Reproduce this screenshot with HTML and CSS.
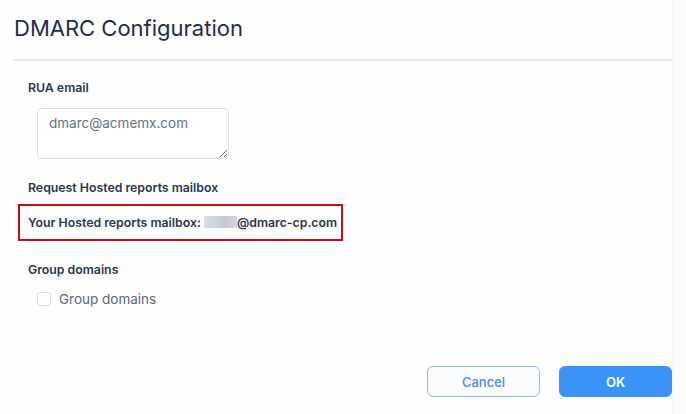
FILE: index.html
```html
<!doctype html>
<html lang="en">

<head>
    <meta charset="utf-8">
    <meta name="viewport" content="width=device-width, initial-scale=1">
    <title>DMARC Configuration</title>
    <link rel="stylesheet" href="styles.css">
</head>

<body>
    <div class="dialog">
        <h1 class="dialog-title">DMARC Configuration</h1>

        <div class="dialog-body">
            <div class="field">
                <label class="field-label" for="rua-email">RUA email</label>
                <textarea id="rua-email" class="rua-input">dmarc@acmemx.com</textarea>
            </div>

            <div class="field">
                <div class="field-label">Request Hosted reports mailbox</div>
                <div class="mailbox-box">
                    <span>Your Hosted reports mailbox: <span class="blurred"></span>@dmarc-cp.com</span>
                </div>
            </div>

            <div class="field group">
                <div class="field-label">Group domains</div>
                <label class="check-row">
                    <span class="check"></span>
                    <span>Group domains</span>
                </label>
            </div>
        </div>

        <div class="dialog-footer">
            <button class="btn btn-cancel">Cancel</button>
            <button class="btn btn-ok">OK</button>
        </div>
    </div>
</body>

</html>
```

FILE: styles.css
```css
body {
    margin: 0;
    background-color: #fbfbfc;
    font-family: Inter, "Noto Sans", sans-serif;
    color: #1f2b45;
}

.dialog {
    width: 673px;
    height: 414px;
    background-color: #fefefe;
    box-sizing: border-box;
    padding-top: 13px;
    border-right: 1px solid #f4f4f6;
}

.dialog-title {
    margin: 0;
    padding: 0 0 0 14px;
    font-size: 22px;
    font-weight: 400;
    line-height: 30px;
    color: #1f2d4a;
}

.dialog-body {
    margin: 16px 0 0 13px;
    border-top: 2px solid #e9e9ef;
    padding: 19px 0 0 15px;
}

.field {
    margin-bottom: 21px;
}

.field-label {
    display: block;
    font-size: 12.3px;
    font-weight: 600;
    color: #2a3650;
    line-height: 16px;
}

.rua-input {
    display: block;
    margin: 12px 0 0 9px;
    width: 192px;
    height: 51px;
    box-sizing: border-box;
    border: 1px solid #dedfe3;
    border-radius: 4px;
    padding: 6px 11px;
    font-family: Inter, "Noto Sans", sans-serif;
    font-size: 13.5px;
    color: #66718a;
    background-color: #fff;
}

.mailbox-box {
    margin: 8px 0 0 -10px;
    width: 325px;
    height: 37px;
    box-sizing: border-box;
    border: 2px solid #cc0a14;
    padding: 0 0 0 8px;
    display: flex;
    align-items: center;
    font-size: 12.3px;
    font-weight: 600;
    color: #2a3650;
}

.blurred {
    display: inline-block;
    vertical-align: -1px;
    width: 33px;
    height: 12px;
    background: linear-gradient(90deg, #d9dce3 0, #cdd1d9 40%, #c3c8d1 60%, #d3d6dd 100%);
}

.group {
    margin-top: 21px;
}

.check-row {
    display: flex;
    align-items: center;
    margin: 13px 0 0 9px;
    font-size: 13.5px;
    color: #5b6680;
}

.check {
    width: 14px;
    height: 14px;
    box-sizing: border-box;
    border: 1px solid #dcdde2;
    border-radius: 3px;
    background-color: #fff;
    margin-right: 8px;
}

.dialog-footer {
    display: flex;
    justify-content: flex-end;
    gap: 19px;
    margin-top: 59px;
}

.btn {
    width: 113px;
    height: 31px;
    border-radius: 6px;
    font-family: Inter, "Noto Sans", sans-serif;
    font-size: 13px;
    font-weight: 500;
}

.btn-cancel {
    background-color: #fafbfc;
    border: 1px solid #8fbef5;
    color: #4a8fe0;
}

.btn-ok {
    background-color: #3a94f7;
    border: 1px solid #3a94f7;
    color: #fff;
    font-weight: 600;
}
```
